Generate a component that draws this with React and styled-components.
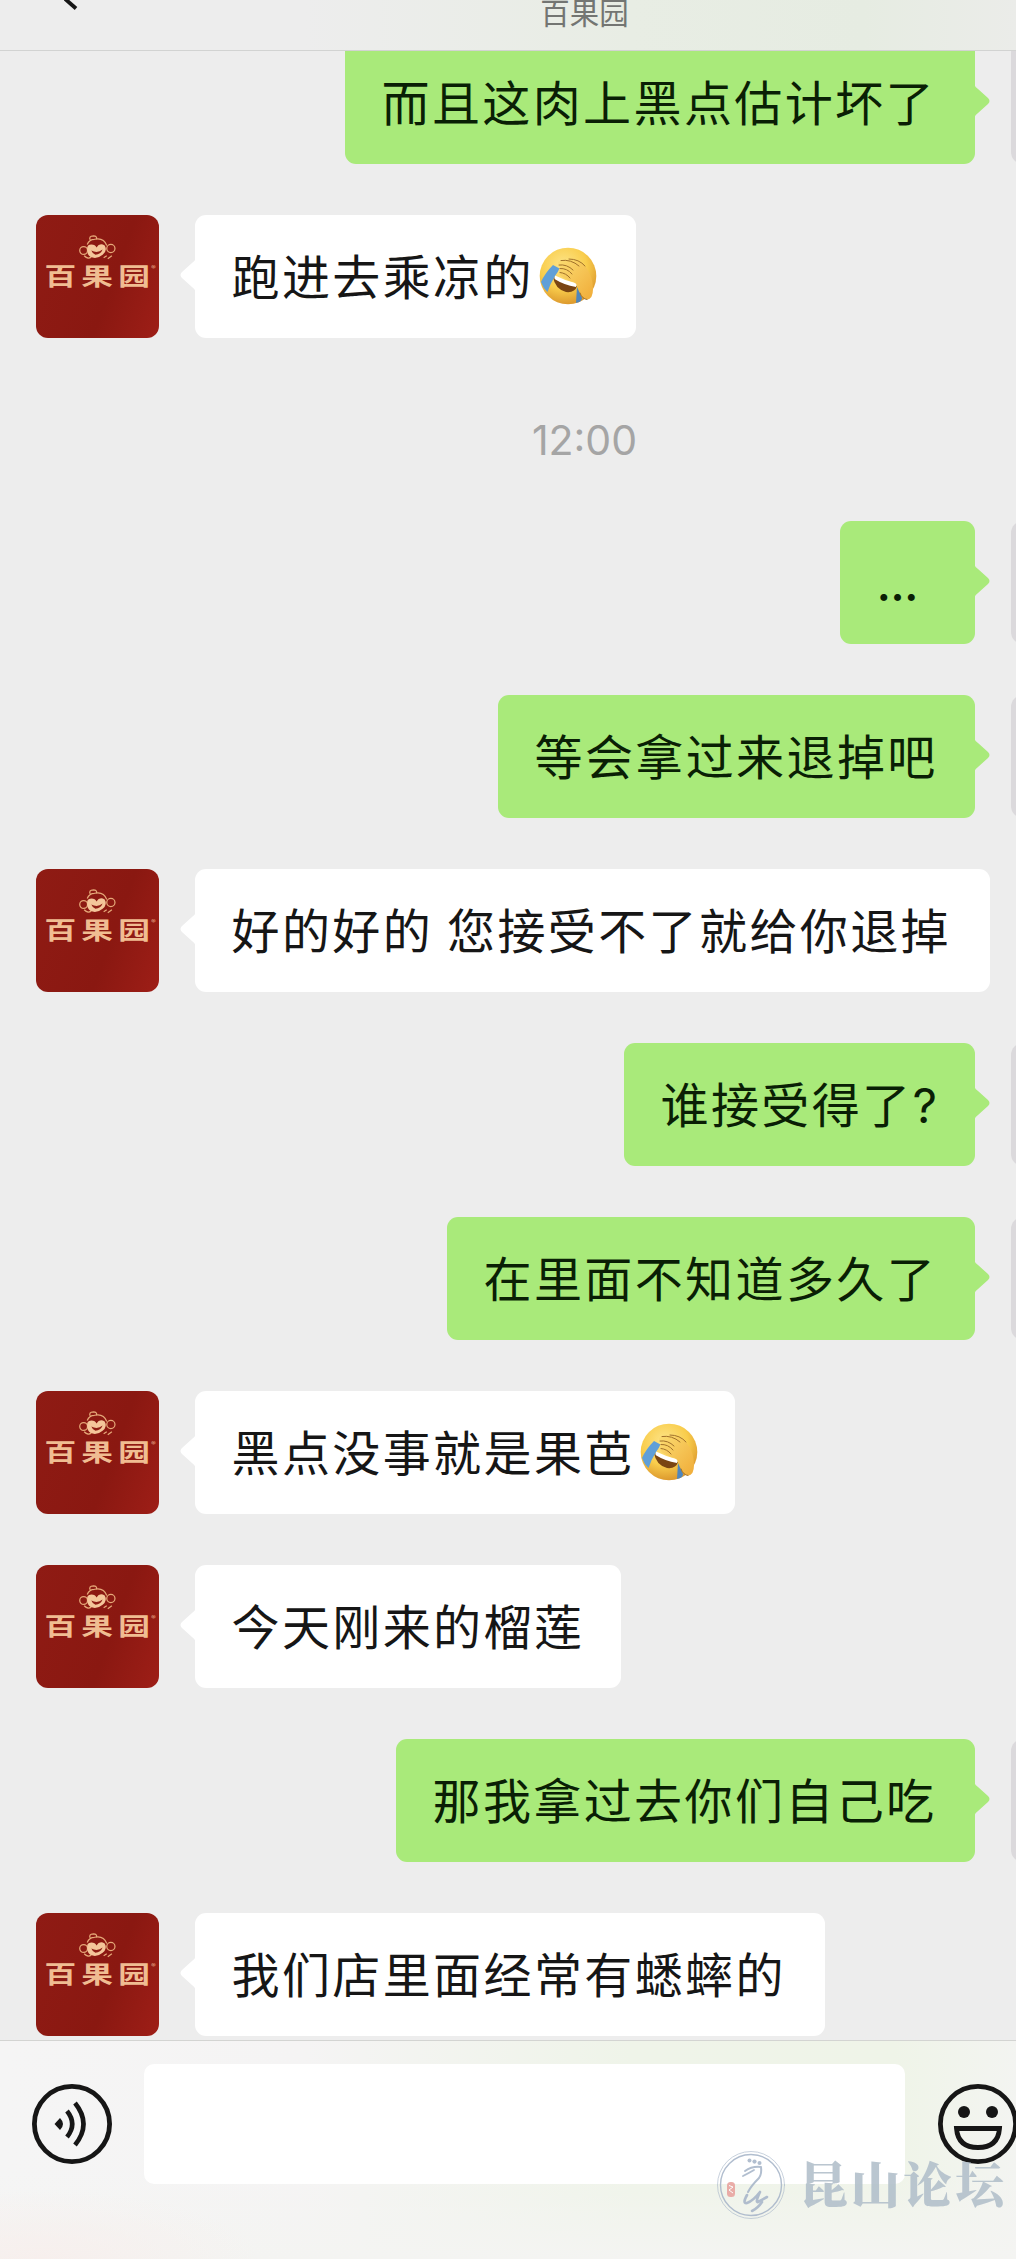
import React from 'react';
import styled, { createGlobalStyle } from 'styled-components';

const messages = [
  { id: 1, mine: true, text: '而且这肉上黑点估计坏了', width: 630 },
  { id: 2, text: '跑进去乘凉的', emoji: true, width: 441 },
  { id: 3, time: '12:00' },
  { id: 4, mine: true, text: '...', width: 135, dots: true },
  { id: 5, mine: true, text: '等会拿过来退掉吧', width: 477 },
  { id: 6, text: '好的好的 您接受不了就给你退掉', width: 795 },
  { id: 7, mine: true, text: '谁接受得了?', width: 351 },
  { id: 8, mine: true, text: '在里面不知道多久了', width: 528 },
  { id: 9, text: '黑点没事就是果芭', emoji: true, width: 540 },
  { id: 10, text: '今天刚来的榴莲', width: 426 },
  { id: 11, mine: true, text: '那我拿过去你们自己吃', width: 579 },
  { id: 12, text: '我们店里面经常有蟋蟀的', width: 630 },
];

const FacepalmIcon = () => (
  <EmojiSvg viewBox="0 0 60 60">
    <defs>
      <radialGradient id="face" cx="42%" cy="32%" r="68%">
        <stop offset="0" stopColor="#fde58a" />
        <stop offset="0.6" stopColor="#f9cd4c" />
        <stop offset="1" stopColor="#dd9a2e" />
      </radialGradient>
      <linearGradient id="hand" x1="0" y1="0" x2="1" y2="1">
        <stop offset="0" stopColor="#fbdc72" />
        <stop offset="1" stopColor="#f0ac38" />
      </linearGradient>
    </defs>
    <circle cx="29" cy="29" r="28.3" fill="url(#face)" />
    <path d="M14 30 Q26 36 38 39 Q36 46 27 45 Q16 42 14 30Z" fill="#7a4513" />
    <path d="M16 28.5 Q27 34 38 36.5 L37 40 Q25 38 15.5 32Z" fill="#fff" />
    <path d="M14 18 L20.5 21.5 Q19 25 16 29 Q11 37 8.5 45 Q4 41 2 35 Q6 26 14 18Z" fill="#5f9fd8" />
    <path d="M38 40 L43 51 Q43 55 37 56Z" fill="#4f86bd" />
    <path
      d="M20 18 Q17 14 22 14 Q27 12 33 13 Q41 13 47 20 Q54 30 54 42 Q54 52 48 52.5 Q43 51 41 45 Q39 38 35 35 Q30 34 25 31 Q18 27 20.5 25 Q19 22 21 21Z"
      fill="url(#hand)"
    />
    <path
      d="M20 18 Q28 17 34 23 M22 13.5 Q32 12 40 19 M30 12 Q40 12 46 19 M21 21.5 Q28 21 33 27 M21 25.5 Q27 26 31 31 M41 46 Q43 52 48 52.5"
      fill="none"
      stroke="#a0702a"
      strokeWidth="1"
      strokeLinecap="round"
    />
  </EmojiSvg>
);

const BrandAvatar = () => (
  <Avatar>
    <Mascot viewBox="0 0 36 25">
      <g fill="none" stroke="#e5a878" strokeWidth="1.2">
        <path d="M8 9 Q10 4 15 4 Q24 2 27 10" />
        <path d="M11 5 Q9 1 14 0.8 Q18 1 17 4" />
        <circle cx="4.5" cy="15" r="3.8" />
        <circle cx="31" cy="13" r="4" />
        <path d="M5 20 Q9 24 12 21 M24 22 L27 20 M28 23 L32 20" />
      </g>
      <path d="M8 15 Q7 9 12 9 Q16 9 17 12 Q20 7 25 10 Q28 15 23 19 Q17 24 11 21 Q8 19 8 15Z" fill="#f4c69a" />
      <path d="M12 15 Q18 18 23 14 Q21 19 16 19 Q13 18 12 15Z" fill="#8e1d14" />
    </Mascot>
    <Brand>
      百果园<sup>®</sup>
    </Brand>
  </Avatar>
);

const Message = ({ message }) => {
  if (message.time) {
    return <Time>{message.time}</Time>;
  }

  return (
    <Row $mine={message.mine}>
      {!message.mine && <BrandAvatar />}
      <Bubble $mine={message.mine} $width={message.width} $dots={message.dots}>
        {message.text}
        {message.emoji && <FacepalmIcon />}
        <Tail viewBox="0 0 16 34" $mine={message.mine}>
          <path d="M0 0 Q1 3 4 5 L14 14 Q17 17 14 20 L4 29 Q1 31 0 34Z" fill="currentColor" />
        </Tail>
      </Bubble>
      {message.mine && <MyAvatar />}
    </Row>
  );
};

const App = () => (
  <Screen>
    <GlobalStyle />
    <Header>
      <BackIcon viewBox="0 0 20 12">
        <path d="M-1 -3 L12 8.5" stroke="#161616" strokeWidth="3.8" />
      </BackIcon>
      百果园
    </Header>
    <Chat>
      {messages.map((message) => (
        <Message key={message.id} message={message} />
      ))}
    </Chat>
    <InputBar>
      <BarIcon viewBox="0 0 80 80">
        <circle cx="40" cy="40" r="37.6" />
        <path d="M22.5 40 L28 34 Q34 40 28 46Z" fill="#161616" stroke="none" />
        <path d="M35 27 Q45.5 40 35 53 M43 19 Q60 40 43 61" strokeWidth="4.6" />
      </BarIcon>
      <Input />
      <BarIcon viewBox="0 0 80 80">
        <circle cx="40" cy="40" r="37.6" />
        <circle cx="26" cy="28" r="6" fill="#161616" stroke="none" />
        <circle cx="54" cy="28" r="6" fill="#161616" stroke="none" />
        <path d="M18.5 44.5 H61.5 Q60 63.5 40 63.5 Q20 63.5 18.5 44.5Z" />
      </BarIcon>
      <Watermark>
        <Seal viewBox="0 0 70 70">
          <g fill="none" stroke="#a9b7ca" strokeLinecap="round" strokeLinejoin="round">
            <circle cx="35" cy="35" r="33.5" strokeWidth="0.7" />
            <circle cx="35" cy="35" r="30.5" strokeWidth="1.4" />
            <path d="M27 26 Q33 23 38 20" strokeWidth="1.8" />
            <path d="M29 21 Q36 16 45 17 Q46 24 43 28 Q35 36 32 42" strokeWidth="2" />
            <path d="M31 45 Q26 54 31 53 Q37 51 44 42 Q39 53 42 52 L51 47" strokeWidth="2.6" />
            <path d="M46 52 Q42 58 36 61" strokeWidth="2.6" />
          </g>
          <g fill="#a9b7ca">
            <circle cx="33.5" cy="10.6" r="2" />
            <circle cx="38.5" cy="11.6" r="2.1" />
            <circle cx="43.5" cy="13" r="2" />
          </g>
          <rect x="11" y="32" width="8" height="15" rx="3.5" fill="#e9a5a0" />
          <path d="M13 35.5 L17 37 L13 40 L17 43" stroke="#fff" fill="none" />
        </Seal>
        <Forum>昆山论坛</Forum>
      </Watermark>
    </InputBar>
  </Screen>
);

export default App;

const GlobalStyle = createGlobalStyle`
  body {
    margin: 0;
    background: #ededed;
    font-family: 'Noto Sans CJK SC', sans-serif;
  }
`;

const Screen = styled.div`
  display: flex;
  flex-direction: column;
  width: 1016px;
  height: 2259px;
  overflow: hidden;
  background: #ededed;
`;

const Header = styled.header`
  position: relative;
  display: flex;
  justify-content: center;
  box-sizing: border-box;
  flex: none;
  height: 51px;
  padding-left: 153px;
  border-bottom: 1px solid #d2d3d2;
  background: linear-gradient(90deg, #ededed 30%, #e8ede4 62%, #e6ece2 85%, #ebece9);
  color: #737572;
  font-size: 29.5px;
  line-height: 23px;
`;

const BackIcon = styled.svg`
  position: absolute;
  top: 0;
  left: 64px;
  width: 20px;
  height: 12px;
`;

const Chat = styled.main`
  display: flex;
  flex: none;
  flex-direction: column;
  justify-content: flex-end;
  gap: 51px;
  box-sizing: border-box;
  height: 1989px;
  padding-bottom: 4px;
  overflow: hidden;
`;

const Row = styled.div`
  display: flex;
  flex: none;
  justify-content: ${(props) => (props.$mine ? 'flex-end' : 'flex-start')};
  gap: 36px;
  height: 123px;
  padding-left: 36px;
  margin-right: ${(props) => (props.$mine ? '-118px' : '0')};
`;

const Bubble = styled.div`
  position: relative;
  display: flex;
  align-items: center;
  flex: none;
  box-sizing: border-box;
  width: ${(props) => props.$width}px;
  height: 123px;
  padding: 2px 0 0 36.5px;
  border-radius: 11px;
  background: ${(props) => (props.$mine ? '#a9ea7a' : '#ffffff')};
  color: ${(props) => (props.$mine ? '#0a1f05' : '#161616')};
  font-family: Inter, 'Noto Sans CJK SC', sans-serif;
  font-size: 48px;
  font-weight: ${(props) => (props.$dots ? 500 : 400)};
  letter-spacing: ${(props) => (props.$dots ? -0.8 : 2.4)}px;
  line-height: 1;
  white-space: pre;
  word-spacing: -2px;
`;

const Tail = styled.svg`
  position: absolute;
  top: 43px;
  width: 16px;
  height: 34px;
  color: ${(props) => (props.$mine ? '#a9ea7a' : '#ffffff')};
  ${(props) => (props.$mine ? 'right: -15px;' : 'left: -15px; transform: scaleX(-1);')}
`;

const EmojiSvg = styled.svg`
  flex: none;
  width: 60px;
  height: 60px;
  margin: 0 0 1px 5px;
`;

const Avatar = styled.div`
  display: flex;
  align-items: center;
  flex: none;
  flex-direction: column;
  width: 123px;
  height: 123px;
  border-radius: 12px;
  background: linear-gradient(110deg, #8f1b14, #8a1811 60%, #9e1e17);
`;

const Mascot = styled.svg`
  width: 37px;
  height: 26px;
  margin-top: 20px;
`;

const Brand = styled.div`
  margin-right: -5px;
  color: #f0bd92;
  font-size: 24px;
  font-weight: 700;
  letter-spacing: 4px;
  line-height: 28px;
  white-space: nowrap;
  transform: scaleX(1.32);

  sup {
    display: inline-block;
    width: 4px;
    margin-left: -3px;
    font-size: 7px;
    font-weight: 400;
    letter-spacing: 0;
    line-height: 0;
    vertical-align: 14px;
  }
`;

const MyAvatar = styled.div`
  flex: none;
  width: 123px;
  height: 123px;
  border-radius: 12px;
  background: #dbd9dc;
`;

const Time = styled.div`
  flex: none;
  height: 81px;
  padding-left: 153px;
  color: #a5a5a5;
  font-family: Inter, sans-serif;
  font-size: 41px;
  line-height: 103px;
  text-align: center;
`;

const InputBar = styled.footer`
  position: relative;
  display: flex;
  flex: none;
  box-sizing: border-box;
  height: 219px;
  padding: 23px 0 0 32px;
  border-top: 1px solid #d3d4d2;
  background:
    radial-gradient(ellipse 220px 70px at 40px 219px, #f7efed, transparent),
    linear-gradient(180deg, transparent 60%, #f4f4f2),
    linear-gradient(90deg, #f5f5f5 0%, #f5f4f4 30%, #eff4e9 62%, #eff4e8 88%, #f3f4f1);
`;

const BarIcon = styled.svg`
  flex: none;
  width: 80px;
  height: 80px;
  margin-top: 20px;
  fill: none;
  stroke: #161616;
  stroke-width: 4.8;
`;

const Input = styled.div`
  flex: none;
  width: 761px;
  height: 120px;
  margin: 0 33px 0 32px;
  border-radius: 10px;
  background: #ffffff;
`;

const Watermark = styled.div`
  position: absolute;
  top: 109px;
  left: 716px;
  display: flex;
  align-items: center;
  gap: 13px;
  opacity: 0.9;
`;

const Seal = styled.svg`
  flex: none;
  width: 70px;
  height: 70px;
`;

const Forum = styled.span`
  color: #b3c0cb;
  font-family: 'Noto Serif CJK SC', 'Noto Sans CJK SC', serif;
  font-size: 49px;
  font-weight: 900;
  letter-spacing: 3px;
  line-height: 64px;
  margin-top: -6px;
  white-space: nowrap;
`;
